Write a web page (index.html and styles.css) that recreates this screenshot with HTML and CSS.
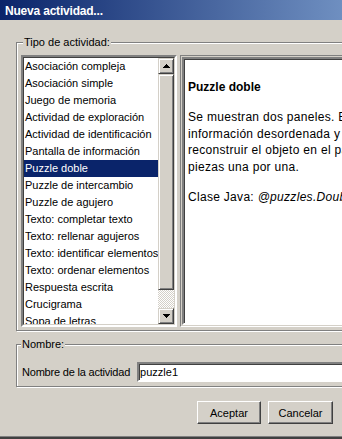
FILE: index.html
```html
<!DOCTYPE html>
<html lang="es">
<head>
  <meta charset="UTF-8">
  <meta name="viewport" content="width=device-width, initial-scale=1.0">
  <link rel="stylesheet" href="styles.css">
  <title>Nueva actividad...</title>
</head>
<body>
  <div class="window">
    <div class="titlebar">Nueva actividad...</div>

    <div class="group group-tipo">
      <span class="group-title">Tipo de actividad:</span>
      <div class="split">
        <div class="list-pane">
          <div class="list-inner">
            <ul class="list">
              <li>Asociación compleja</li>
              <li>Asociación simple</li>
              <li>Juego de memoria</li>
              <li>Actividad de exploración</li>
              <li>Actividad de identificación</li>
              <li>Pantalla de información</li>
              <li class="selected">Puzzle doble</li>
              <li>Puzzle de intercambio</li>
              <li>Puzzle de agujero</li>
              <li>Texto: completar texto</li>
              <li>Texto: rellenar agujeros</li>
              <li>Texto: identificar elementos</li>
              <li>Texto: ordenar elementos</li>
              <li>Respuesta escrita</li>
              <li>Crucigrama</li>
              <li>Sopa de letras</li>
            </ul>
            <div class="scrollbar">
              <div class="sb-btn">
                <svg width="7" height="4" viewBox="0 0 7 4"><path d="M3 0h1v1h1v1h1v1h1v1H0V3h1V2h1V1h1z"/></svg>
              </div>
              <div class="sb-thumb"></div>
              <div class="sb-track"></div>
              <div class="sb-btn">
                <svg width="7" height="4" viewBox="0 0 7 4"><path d="M0 0h7v1H6v1H5v1H4v1H3V3H2V2H1V1H0z"/></svg>
              </div>
            </div>
          </div>
        </div>

        <div class="info-pane">
          <div class="info">
            <h2>Puzzle doble</h2>
            <p>Se muestran dos paneles. En uno de ellos hay la<br>información desordenada y en el otro hay que<br>reconstruir el objeto en el panel vacío, moviendo las<br>piezas una por una.</p>
            <p>Clase Java: <i>@puzzles.DoublePuzzle</i></p>
          </div>
        </div>
      </div>
    </div>

    <div class="group group-nombre">
      <span class="group-title">Nombre:</span>
      <div class="field-row">
        <label for="nombre">Nombre de la actividad</label>
        <input class="field" id="nombre" type="text" value="puzzle1">
      </div>
    </div>

    <div class="buttons">
      <button class="btn btn-ok">Aceptar</button>
      <button class="btn btn-cancel">Cancelar</button>
    </div>
  </div>
</body>
</html>
```

FILE: styles.css
```css
body {
  margin: 0;
  background-color: #d4d0c8;
  overflow: hidden;
  font-family: "Liberation Sans", Arial, sans-serif;
  font-size: 11px;
  color: #000;
}

.window {
  width: 530px;
  height: 439px;
  box-sizing: border-box;
  border-bottom: 2px solid #404040;
  box-shadow: inset 0 -1px #808080;
}

.titlebar {
  height: 20px;
  box-sizing: border-box;
  padding: 3px 0 0 5px;
  line-height: 17px;
  font-size: 12px;
  font-weight: bold;
  letter-spacing: -0.2px;
  color: #fff;
  background: linear-gradient(to right, #0a246a, #a6caf0);
}

/* etched group box */
.group {
  position: relative;
  margin: 0 16px;
  border: 1px solid #808080;
  box-shadow: inset 1px 1px #fff, 1px 1px #fff;
}

.group-title {
  position: absolute;
  top: -7px;
  padding: 0 1px;
  line-height: 13px;
  background-color: #d4d0c8;
}

.group-tipo {
  margin-top: 22px;
  padding: 12px 0 3px 4px;
}

.group-tipo .group-title {
  left: 6px;
}

.group-nombre {
  margin-top: 13px;
  padding: 17px 0 4px 5px;
}

.group-nombre .group-title {
  left: 4px;
}

.split {
  display: flex;
  height: 272px;
}

/* list with its scrollbar */
.list-pane {
  width: 156px;
  box-sizing: border-box;
  border: 2px solid;
  border-color: #808080 #fff #fff #808080;
}

.list-inner {
  display: flex;
  height: 100%;
  box-sizing: border-box;
  border: 1px solid;
  border-color: #404040 #d4d0c8 #d4d0c8 #404040;
}

.list {
  flex: 1;
  margin: 0;
  padding: 0;
  list-style: none;
  overflow: hidden;
  background-color: #fff;
}

.list li {
  height: 17px;
  line-height: 17px;
  padding-left: 1px;
  white-space: nowrap;
}

.list .selected {
  background-color: #0a246a;
  color: #fff;
}

.scrollbar {
  width: 16px;
  display: flex;
  flex-direction: column;
}

.sb-btn,
.sb-thumb {
  box-sizing: border-box;
  background-color: #d4d0c8;
  border: 1px solid;
  border-color: #d4d0c8 #404040 #404040 #d4d0c8;
  box-shadow: inset 1px 1px #fff, inset -1px -1px #808080;
}

.sb-btn {
  height: 16px;
  display: flex;
  align-items: center;
  justify-content: center;
}

.sb-btn svg {
  display: block;
  fill: #000;
  shape-rendering: crispEdges;
}

.sb-thumb {
  height: 216px;
}

.sb-track {
  flex: 1;
  background: repeating-conic-gradient(#fff 0 25%, #d4d0c8 0 50%) 0 0 / 2px 2px;
}

/* description panel */
.info-pane {
  flex: 1;
  margin-left: 3px;
  padding: 1px;
  border: 1px solid;
  border-color: #808080 #fff #fff #808080;
}

.info {
  height: 100%;
  box-sizing: border-box;
  padding: 21px 4px 0 4px;
  border: 2px solid;
  border-color: #808080 #fff #fff #808080;
  box-shadow: inset 1px 1px #404040;
  background-color: #fff;
  font-size: 12px;
  white-space: nowrap;
  overflow: hidden;
}

.info h2 {
  margin: 0 0 14px 0;
  font-size: 12px;
  line-height: 15px;
}

.info p {
  margin: 0 0 14px 0;
  line-height: 16.5px;
  letter-spacing: 0.3px;
}

/* name row */
.field-row {
  display: flex;
  align-items: center;
  gap: 7px;
}

.field-row label {
  letter-spacing: -0.2px;
}

.field {
  flex: 1;
  height: 20px;
  box-sizing: border-box;
  margin: 0;
  padding: 0 1px;
  border: 2px solid;
  border-color: #808080 #fff #fff #808080;
  box-shadow: inset 1px 1px #404040;
  outline: none;
  font-family: inherit;
  font-size: 11px;
  color: #000;
  background-color: #fff;
}

.buttons {
  display: flex;
  justify-content: center;
  gap: 7px;
  margin-top: 14px;
}

.btn {
  height: 23px;
  padding: 0;
  font-family: inherit;
  font-size: 11px;
  color: #000;
  background-color: #d4d0c8;
  border: 1px solid;
  border-color: #fff #404040 #404040 #fff;
  box-shadow: inset -1px -1px #808080;
}

.btn-ok {
  width: 64px;
}

.btn-cancel {
  width: 65px;
}
```
